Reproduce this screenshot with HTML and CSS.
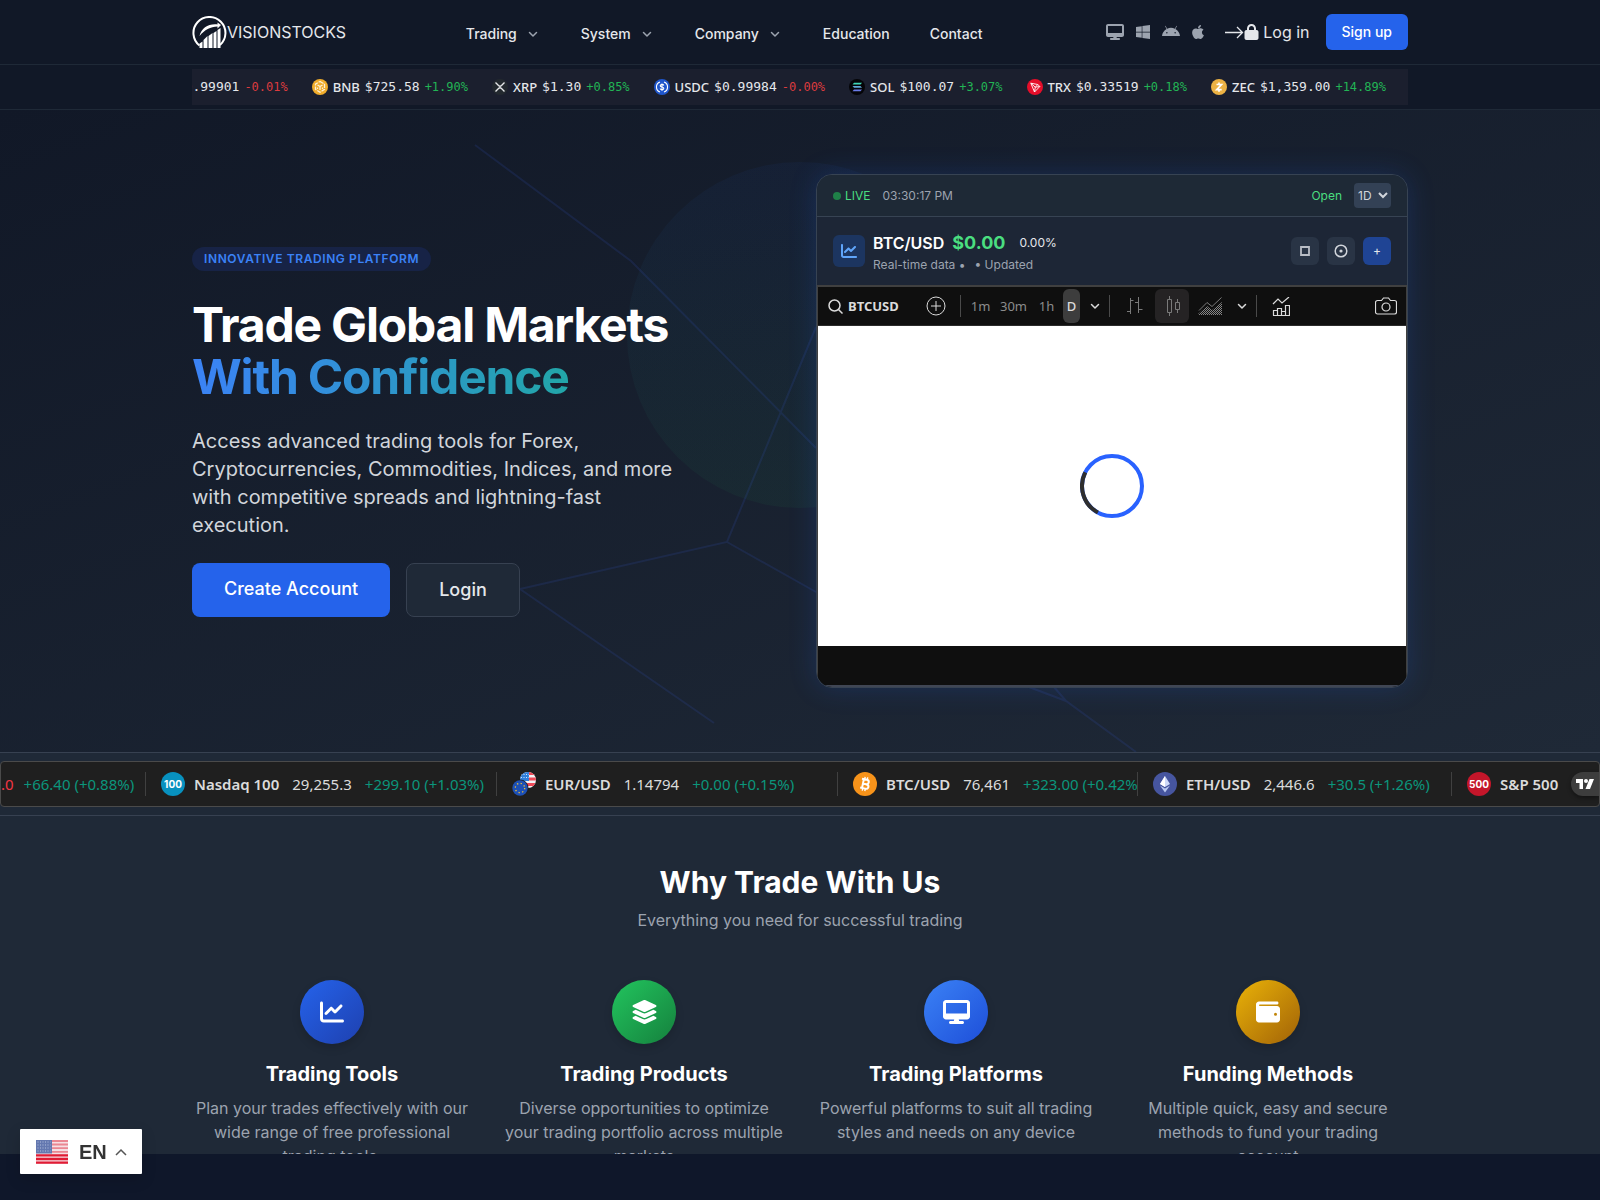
FILE: index.html
```html
<!DOCTYPE html>
<html lang="en">
<head>
<meta charset="utf-8">
<meta name="viewport" content="width=device-width, initial-scale=1">
<title>VisionStocks</title>
<link rel="stylesheet" href="styles.css">
</head>
<body>
<svg class="defs" aria-hidden="true">
  <symbol id="i-desktop" viewBox="0 0 576 512"><path d="M64 0C28.7 0 0 28.7 0 64V352c0 35.3 28.7 64 64 64H240l-10.7 32H160c-17.7 0-32 14.3-32 32s14.3 32 32 32H416c17.7 0 32-14.3 32-32s-14.3-32-32-32H346.7L336 416H512c35.3 0 64-28.7 64-64V64c0-35.3-28.7-64-64-64H64zM512 64V288H64V64H512z"/></symbol>
  <symbol id="i-chart" viewBox="0 0 512 512"><path d="M64 64c0-17.7-14.3-32-32-32S0 46.3 0 64V400c0 44.2 35.8 80 80 80H480c17.7 0 32-14.3 32-32s-14.3-32-32-32H80c-8.8 0-16-7.2-16-16V64zm406.6 86.6c12.5-12.5 12.5-32.8 0-45.3s-32.8-12.5-45.3 0L320 210.7l-57.4-57.4c-12.5-12.5-32.8-12.5-45.3 0l-112 112c-12.5 12.5-12.5 32.8 0 45.3s32.8 12.5 45.3 0L240 221.3l57.4 57.4c12.5 12.5 32.8 12.5 45.3 0l128-128z"/></symbol>
  <symbol id="i-chevron" viewBox="0 0 16 16"><path d="M4.5 6.5 8 10l3.500-3.500" fill="none" stroke="currentColor" stroke-width="1.500" stroke-linecap="round" stroke-linejoin="round"/></symbol>
</svg>

<div class="page">
  <header class="header">
    <div class="container header-row">
      <a class="brand" href="#">
        <svg class="brand-mark" viewBox="0 0 34 32" aria-hidden="true">
          <path d="M7 29.500A16 16 0 1 1 27.500 29" fill="none" stroke="#fff" stroke-width="2"/>
          <path d="M7 20C9 12 16 7.500 25 8.500V6.500l3.500 2.500-3.500 3.500V10.500C18 10.500 12 14 7 20z" fill="#fff"/>
          <path d="M7 27.500l3-2V32H7zM11 24l4-4v12h-4zM16 20l4-3v15h-4zM21 17l3-2v17h-3zM25 14l3-2v20h-3z" fill="#fff"/>
        </svg>
        <span>VISIONSTOCKS</span>
      </a>
      <nav class="nav" aria-label="Main">
        <a href="#">Trading <svg class="chev" aria-hidden="true"><use href="#i-chevron"/></svg></a>
        <a href="#">System <svg class="chev" aria-hidden="true"><use href="#i-chevron"/></svg></a>
        <a href="#">Company <svg class="chev" aria-hidden="true"><use href="#i-chevron"/></svg></a>
        <a href="#">Education</a>
        <a href="#">Contact</a>
      </nav>
      <div class="actions">
        <div class="platforms">
          <svg width="18" height="16" aria-hidden="true"><use href="#i-desktop"/></svg>
          <svg width="14" height="16" viewBox="0 0 448 512" aria-hidden="true"><path d="M0 93.700l183.600-25.300v177.400H0V93.700zm0 324.600l183.600 25.300V268.400H0v149.900zm203.800 28L448 480V268.400H203.800v177.900zm0-380.600v180.100H448V32L203.800 65.700z"/></svg>
          <svg width="18" height="16" viewBox="0 0 576 512" aria-hidden="true"><path d="M420.550,301.930a24,24,0,1,1,24-24,24,24,0,0,1-24,24m-265.100,0a24,24,0,1,1,24-24,24,24,0,0,1-24,24m273.700-144.480,47.940-83a10,10,0,1,0-17.270-10h0l-48.540,84.070a301.250,301.250,0,0,0-246.560,0L116.180,64.450a10,10,0,1,0-17.270,10h0l47.940,83C64.530,202.220,8.240,285.550,0,384H576c-8.240-98.450-64.540-181.780-146.850-226.550"/></svg>
          <svg width="12" height="16" viewBox="0 0 384 512" aria-hidden="true"><path d="M318.700 268.700c-.2-36.700 16.400-64.400 50-84.800-18.800-26.900-47.200-41.700-84.700-44.600-35.500-2.800-74.300 20.700-88.500 20.700-15 0-49.400-19.700-76.400-19.700C63.300 141.200 4 184.800 4 273.500q0 39.300 14.400 81.200c12.800 36.700 59 126.700 107.200 125.200 25.200-.6 43-17.900 75.800-17.900 31.800 0 48.300 17.900 76.400 17.900 48.600-.7 90.400-82.500 102.600-119.300-65.200-30.700-61.700-90-61.700-91.900zm-56.600-164.200c27.300-32.400 24.800-61.900 24-72.500-24.100 1.400-52 16.400-67.900 34.900-17.500 19.800-27.800 44.300-25.600 71.900 26.100 2 49.900-11.400 69.500-34.300z"/></svg>
        </div>
        <a class="login" href="#"><svg width="20" height="16" viewBox="0 0 20 16" fill="none" stroke="#e5e7eb" stroke-width="1.300" aria-hidden="true"><path d="M1 8.500h17.500M13 3l5.500 5.500L13 14"/></svg><svg width="15" height="16" viewBox="0 0 448 512" aria-hidden="true"><path d="M144 144v48H304V144c0-44.200-35.800-80-80-80s-80 35.800-80 80zM80 192V144C80 64.500 144.500 0 224 0s144 64.500 144 144v48h16c35.300 0 64 28.700 64 64V448c0 35.300-28.700 64-64 64H64c-35.300 0-64-28.700-64-64V256c0-35.300 28.700-64 64-64H80z"/></svg><span class="login-text">Log in</span></a>
        <a class="signup" href="#">Sign up</a>
      </div>
    </div>
  </header>

  <div class="coins">
    <div class="container">
      <ul class="coin-list">
        <li><span class="price">$0.99901</span><span class="pct down">-0.01%</span></li>
        <li>
          <svg class="coin" viewBox="0 0 16 16" aria-hidden="true"><circle cx="8" cy="8" r="8" fill="#f0ac2b"/><path d="M8 2.500l4.500 2.600v5.300L8 13.200l-4.500-2.800V5.100z" fill="none" stroke="#fdf1d8" stroke-width="1.300" stroke-dasharray="4 1"/><path d="M5.500 6L8 7.500 10.500 6M8 7.500V11M5.500 8.500v1.500M10.500 8.500v1.500" fill="none" stroke="#fdf1d8" stroke-width="1.300"/></svg>
          <span class="sym">BNB</span><span class="price">$725.58</span><span class="pct up">+1.90%</span></li>
        <li>
          <svg class="coin" viewBox="0 0 16 16" aria-hidden="true"><circle cx="8" cy="8" r="8" fill="#23292f"/><path d="M3.500 3.500l3 3q1.500 1.300 3 0l3-3M3.500 12.500l3-3q1.500-1.300 3 0l3 3" fill="none" stroke="#e6e8ea" stroke-width="1.400"/></svg>
          <span class="sym">XRP</span><span class="price">$1.30</span><span class="pct up">+0.85%</span></li>
        <li>
          <svg class="coin" viewBox="0 0 16 16" aria-hidden="true"><circle cx="8" cy="8" r="8" fill="#1f56cc"/><path d="M6 3a5.300 5.300 0 0 0 0 10M10 3a5.300 5.300 0 0 1 0 10M9.800 6.500Q9.300 5.400 8 5.400T6.200 6.700Q6.200 7.700 8 8T9.800 9.400Q9.800 10.600 8 10.600T6.200 9.400M8 4.500V12" fill="none" stroke="#fff" stroke-width="1.100"/></svg>
          <span class="sym">USDC</span><span class="price">$0.99984</span><span class="pct down">-0.00%</span></li>
        <li>
          <svg class="coin" viewBox="0 0 16 16" aria-hidden="true"><circle cx="8" cy="8" r="8" fill="#050508"/><path d="M5 3.700h8L11.500 5.500h-8z" fill="#3fd6b5"/><path d="M3.500 7h8L13 8.800H5z" fill="#5fa8d8"/><path d="M5 10.400h8l-1.500 1.800h-8z" fill="#6a7be8"/></svg>
          <span class="sym">SOL</span><span class="price">$100.07</span><span class="pct up">+3.07%</span></li>
        <li>
          <svg class="coin" viewBox="0 0 16 16" aria-hidden="true"><circle cx="8" cy="8" r="8" fill="#e50e2a"/><path d="M3.800 4.200l7 1.300 2 2L7.500 13zM3.800 4.200l4.500 4M12.800 7.500l-4.500.7L7.500 13M10.800 5.500L8.300 8.200" fill="none" stroke="#fff" stroke-width=".9" stroke-linejoin="round"/></svg>
          <span class="sym">TRX</span><span class="price">$0.33519</span><span class="pct up">+0.18%</span></li>
        <li>
          <svg class="coin" viewBox="0 0 16 16" aria-hidden="true"><circle cx="8" cy="8" r="8" fill="#ecb244"/><path d="M5.500 5.500h5L5.700 10.700h5M8 3.500v2M8 10.700v2" fill="none" stroke="#fff" stroke-width="1.700"/></svg>
          <span class="sym">ZEC</span><span class="price">$1,359.00</span><span class="pct up">+14.89%</span></li>
      </ul>
    </div>
  </div>

  <section class="hero">
    <svg class="hero-art" viewBox="0 0 1600 642" preserveAspectRatio="xMidYMid slice" aria-hidden="true">
      <defs><linearGradient id="g-disc" x1="0" y1="0" x2="0" y2="1"><stop offset="0" stop-color="#2563eb"/><stop offset="1" stop-color="#22c55e"/></linearGradient></defs>
      <circle cx="800" cy="225" r="173" fill="url(#g-disc)" opacity=".05"/>
      <g fill="none" stroke="#3b5bdb" stroke-width="2" opacity=".14">
        <path d="M475 35L631 151L816 338M816 217L727 432L520 479L714 613M727 432L816 482L900 530M1000 566L1066 591L1136 642M1048 570L1066 591"/>
      </g>
    </svg>
    <div class="container hero-grid">
      <div class="hero-copy">
        <span class="badge">INNOVATIVE TRADING PLATFORM</span>
        <h1>Trade Global Markets <span class="accent">With Confidence</span></h1>
        <p class="lead">Access advanced trading tools for Forex, Cryptocurrencies, Commodities, Indices, and more with competitive spreads and lightning-fast execution.</p>
        <div class="cta">
          <a class="btn btn-primary" href="#">Create Account</a>
          <a class="btn btn-outline" href="#">Login</a>
        </div>
      </div>

      <div class="card">
        <div class="card-top">
          <div class="live"><i class="dot"></i><span class="green">LIVE</span><time>03:30:17 PM</time></div>
          <div class="status"><span class="green">Open</span>
            <select aria-label="Interval"><option>1D</option><option>1W</option></select></div>
        </div>
        <div class="card-head">
          <div class="pair-icon"><svg width="16" height="16" aria-hidden="true"><use href="#i-chart"/></svg></div>
          <div class="pair">
            <div class="pair-line"><strong>BTC/USD</strong><b>$0.00</b><span>0.00%</span></div>
            <div class="pair-sub"><span>Real-time data •</span><span>• Updated</span></div>
          </div>
          <div class="tools">
            <button type="button" aria-label="Fullscreen"><svg width="12" height="12" viewBox="0 0 12 12" fill="none"><path d="M2 2h8v8H2z" stroke="#b9bdc5" stroke-width="1.800"/></svg></button>
            <button type="button" aria-label="Focus"><svg width="14" height="14" viewBox="0 0 14 14" fill="none"><circle cx="7" cy="7" r="5.800" stroke="#d1d5db" stroke-width="1.500"/><circle cx="7" cy="7" r="1.600" fill="#d1d5db"/></svg></button>
            <button type="button" class="add">+</button>
          </div>
        </div>
        <div class="widget">
          <div class="toolbar">
            <button type="button" class="t-symbol"><svg width="15" height="15" viewBox="0 0 15 15" fill="none" stroke="#dbdbdb" stroke-width="1.500" aria-hidden="true"><circle cx="6.500" cy="6.500" r="5.500"/><path d="M10.500 10.500l4 4"/></svg>BTCUSD</button>
            <button type="button" class="t-icon t-wide" aria-label="Compare"><svg width="20" height="20" viewBox="0 0 20 20" fill="none" stroke="#dbdbdb"><circle cx="10" cy="10" r="9"/><path d="M5 10h10M10 5v10"/></svg></button>
            <i class="sep"></i>
            <div class="intervals">
              <button type="button">1m</button><button type="button">30m</button><button type="button">1h</button><button type="button" class="on">D</button>
            </div>
            <button type="button" class="t-drop" aria-label="More intervals"><svg class="chev" aria-hidden="true"><use href="#i-chevron"/></svg></button>
            <i class="sep"></i>
            <div class="styles">
              <button type="button" class="t-icon" aria-label="Bars"><svg width="17" height="18" viewBox="0 0 17 18" fill="none" stroke="#7a7a7a"><path d="M4.500 1v16M1 14.500h3.500M4.500 3.500h3M12.500 0v16M9 5.500h3.500M12.500 12.500h4"/></svg></button>
              <button type="button" class="t-icon active" aria-label="Candles"><svg width="15" height="20" viewBox="0 0 15 20" fill="none" stroke="#7a7a7a"><path d="M2.500 3.500h4v13h-4zM4.500 0v3.500M4.500 16.500V20M10.500 6.500h4v7h-4zM12.500 3v3.500M12.500 13.500V17"/></svg></button>
              <button type="button" class="t-icon" aria-label="Area"><svg width="24" height="18" viewBox="0 0 24 18" fill="none"><defs><pattern id="p-dots" width="2" height="2" patternUnits="userSpaceOnUse"><path d="M0 0h1v1H0zM1 1h1v1H1z" fill="#858585"/></pattern></defs><path d="M0 17l9-8 5 4L24 5v13H0z" fill="url(#p-dots)"/><path d="M1 13.500L9 5.500l5 4 9.500-9" stroke="#7a7a7a"/></svg></button>
            </div>
            <button type="button" class="t-drop" aria-label="More styles"><svg class="chev" aria-hidden="true"><use href="#i-chevron"/></svg></button>
            <i class="sep"></i>
            <button type="button" class="t-icon t-ind" aria-label="Indicators"><svg width="18" height="19" viewBox="0 0 18 19" fill="none" stroke="#dbdbdb" stroke-width="1.200"><path d="M1 7l5-5 4 4 7-6M1.500 18.500v-5h4v5M5.500 18.500v-7h4v7M9.500 18.500v-4h4v4M13.500 18.500V8.500h4v10zM1 18.500h16"/></svg></button>
            <button type="button" class="t-icon t-cam" aria-label="Snapshot"><svg width="22" height="18" viewBox="0 0 22 18" fill="none" stroke="#dbdbdb" stroke-width="1.200"><path d="M6.500 3.500l2-2.500h5l2 2.500h4a2 2 0 0 1 2 2V15a2 2 0 0 1-2 2h-17a2 2 0 0 1-2-2V5.500a2 2 0 0 1 2-2z"/><circle cx="11" cy="10" r="4"/></svg></button>
          </div>
          <div class="chart">
            <svg width="64" height="64" viewBox="0 0 64 64" fill="none" stroke-width="4" aria-hidden="true"><circle cx="32" cy="32" r="30" stroke="#2962ff"/><path d="M17.900 58.500A30 30 0 0 1 5.300 18.400" stroke="#2e2e2e"/></svg>
          </div>
          <div class="chart-foot"></div>
        </div>
      </div>
    </div>
  </section>

  <section class="tape-wrap">
    <div class="tape">
      <div class="quote quote-first"><span class="last neg">.0</span><span class="chg">+66.40 (+0.88%)</span></div>
      <div class="quote"><span class="disc disc-ndx">100</span><b>Nasdaq 100</b><span class="last">29,255.3</span><span class="chg">+299.10 (+1.03%)</span></div>
      <div class="quote">
        <svg class="q-icon" viewBox="0 0 24 24" aria-hidden="true"><defs><clipPath id="c-us"><circle cx="16" cy="8" r="8"/></clipPath></defs><g clip-path="url(#c-us)"><path d="M8 0h16v16H8z" fill="#f3f3f5"/><path d="M16 0h8v3h-8zM16 5.500h8v3h-8zM8 11h16v3H8z" fill="#ee4a58"/><path d="M8 0h9v9H8z" fill="#2f7fdc"/><path d="M9 2.500h8M9 5.500h8" stroke="#cfe4fa" stroke-dasharray="1 1.500"/></g><circle cx="8" cy="16" r="8.500" fill="#1e1e1e"/><circle cx="8" cy="16" r="7.700" fill="#1d50b5"/><circle cx="8" cy="16" r="4.700" fill="none" stroke="#f2c230" stroke-width="1.300" stroke-dasharray="1.300 2.400"/></svg>
        <b>EUR/USD</b><span class="last">1.14794</span><span class="chg">+0.00 (+0.15%)</span></div>
      <div class="quote">
        <svg class="q-icon" viewBox="0 0 24 24" aria-hidden="true"><circle cx="12" cy="12" r="12" fill="#f7931a"/><g transform="rotate(12 12 12)" fill="none" stroke="#fff" stroke-width="2"><path d="M8 7.500h5q2.300 0 2.300 2.200T13 12H9.700M13 12q3 0 3 2.300T13 16.500H8M9.900 7.500v9"/><path d="M10.700 5v2.500M13.300 5v2.500M10.700 16.500V19M13.300 16.500V19" stroke-width="1.400"/></g></svg>
        <b>BTC/USD</b><span class="last">76,461</span><span class="chg">+323.00 (+0.42%)</span></div>
      <div class="quote">
        <svg class="q-icon" viewBox="0 0 24 24" aria-hidden="true"><circle cx="12" cy="12" r="12" fill="#46559f"/><path d="M12 4l5 8-5 3-5-3z" fill="#cdd9f8"/><path d="M12 4v11l-5-3z" fill="#fff"/><path d="M7 13.500l5 3 5-3-5 7z" fill="#b9c8f0"/></svg>
        <b>ETH/USD</b><span class="last">2,446.6</span><span class="chg">+30.5 (+1.26%)</span></div>
      <div class="quote"><span class="disc disc-spx">500</span><b>S&amp;P 500</b></div>
      <a class="tv" href="#" aria-label="TradingView"><svg width="18" height="11" viewBox="0 0 18 11" aria-hidden="true"><path d="M0 0h7v10H3.500V4H0zM13.500 0H18l-4 10H9.500z" fill="#fff"/><circle cx="10" cy="2" r="2" fill="#fff"/></svg></a>
    </div>
  </section>

  <section class="features">
    <div class="container">
      <h2>Why Trade With Us</h2>
      <p class="sub">Everything you need for successful trading</p>
      <div class="feature-grid">
        <article>
          <div class="orb orb-indigo"><svg width="24" height="24" aria-hidden="true"><use href="#i-chart"/></svg></div>
          <h3>Trading Tools</h3><p>Plan your trades effectively with our wide range of free professional trading tools.</p>
        </article>
        <article>
          <div class="orb orb-green"><svg width="27" height="24" viewBox="0 0 576 512" aria-hidden="true"><path d="M264.500 5.200c14.900-6.900 32.100-6.900 47 0l218.600 101c8.500 3.900 13.900 12.400 13.900 21.800s-5.400 17.900-13.900 21.800l-218.600 101c-14.900 6.900-32.100 6.900-47 0L45.900 149.800C37.400 145.800 32 137.300 32 128s5.400-17.900 13.900-21.800L264.500 5.200zM476.900 209.600l53.200 24.600c8.500 3.900 13.900 12.400 13.900 21.800s-5.400 17.900-13.900 21.800l-218.600 101c-14.900 6.900-32.100 6.900-47 0L45.900 277.800C37.400 273.800 32 265.300 32 256s5.400-17.900 13.900-21.800l53.200-24.600 152 70.200c23.400 10.800 50.400 10.800 73.800 0l152-70.200zm-152 198.200l152-70.200 53.200 24.600c8.500 3.900 13.900 12.400 13.900 21.800s-5.400 17.900-13.900 21.800l-218.600 101c-14.900 6.900-32.100 6.900-47 0L45.900 405.800C37.400 401.800 32 393.300 32 384s5.400-17.900 13.900-21.800l53.200-24.600 152 70.200c23.400 10.800 50.400 10.800 73.800 0z"/></svg></div>
          <h3>Trading Products</h3><p>Diverse opportunities to optimize your trading portfolio across multiple markets</p>
        </article>
        <article>
          <div class="orb orb-blue"><svg width="27" height="24" aria-hidden="true"><use href="#i-desktop"/></svg></div>
          <h3>Trading Platforms</h3><p>Powerful platforms to suit all trading styles and needs on any device</p>
        </article>
        <article>
          <div class="orb orb-gold"><svg width="24" height="24" viewBox="0 0 512 512" aria-hidden="true"><path d="M64 32C28.700 32 0 60.700 0 96V416c0 35.300 28.700 64 64 64H448c35.300 0 64-28.700 64-64V192c0-35.300-28.700-64-64-64H80c-8.800 0-16-7.200-16-16s7.200-16 16-16H448c17.700 0 32-14.300 32-32s-14.300-32-32-32H64zM416 272a32 32 0 1 1 0 64 32 32 0 1 1 0-64z"/></svg></div>
          <h3>Funding Methods</h3><p>Multiple quick, easy and secure methods to fund your trading account</p>
        </article>
      </div>
    </div>
  </section>
</div>

<button type="button" class="lang">
  <svg width="32" height="24" viewBox="0 0 32 24" aria-hidden="true"><path d="M0 0h32v24H0z" fill="#f6dfe3"/><path d="M0 1h32M0 4.500h32M0 8.200h32M0 11.800h32" stroke="#ea8792" stroke-width="1.800"/><path d="M0 15.400h32M0 19h32M0 22.600h32" stroke="#e01b34" stroke-width="2.400"/><path d="M0 0h16v13.500H0z" fill="#6478b0"/><path d="M1.500 2h13M1.500 5h13M1.500 8h13M1.500 11h13" stroke="#b4c0de" stroke-dasharray="1 1.500"/></svg>
  <span>EN</span>
  <svg width="12" height="8" viewBox="0 0 12 8" fill="none" stroke="#555" stroke-width="1.500" aria-hidden="true"><path d="M1 7l5-5 5 5"/></svg>
</button>
</body>
</html>
```
FILE: styles.css
```css
* { box-sizing: border-box; }

body {
  margin: 0;
  height: 100vh;
  display: grid;
  grid-template-rows: minmax(0, 1fr) 46px;
  overflow: hidden;
  background: #0f172a;
  color: #e5e7eb;
  font: 16px/24px Inter, sans-serif;
}

a { color: inherit; text-decoration: none; }
button { border: 0; padding: 0; background: none; color: inherit; font: inherit; }
svg { display: block; flex: none; }
svg:not([fill]) { fill: currentColor; }
h1, h2, h3, p, ul { margin: 0; padding: 0; }
.defs { position: absolute; width: 0; height: 0; }
.page { overflow: hidden; background: #1f2937; }
.container { max-width: 1280px; margin: 0 auto; padding: 0 32px; }
.chev { width: 16px; height: 16px; }

/* Header */
.header { background: #111827; border-bottom: 1px solid #1f2937; }
.header-row { display: flex; align-items: center; justify-content: space-between; height: 64px; }
.brand { display: flex; align-items: center; }
.brand-mark { width: 35px; height: 32px; }
.nav { display: flex; gap: 40px; padding: 4px 4px 0 0; font-size: 14px; font-weight: 500; }
.nav a { display: flex; align-items: center; gap: 8px; }
.nav .chev { color: #9ca3af; }
.actions { display: flex; align-items: center; gap: 16px; }
.platforms { display: flex; gap: 12px; padding-right: 4px; color: #9ca3af; }
.login { display: flex; align-items: center; }
.login-text { padding-left: 4px; }
.signup { padding: 8px 16px; border-radius: 6px; background: #2563eb; color: #fff; font-size: 14px; line-height: 20px; font-weight: 500; }

/* Coin ticker */
.coins { padding: 4px 0; background: #111827; border-bottom: 1px solid #1f2937; }
.coin-list {
  display: flex; align-items: center; justify-content: flex-end; gap: 24px;
  height: 36px; padding-right: 22px; overflow: hidden; list-style: none; background: #1b1f2e;
}
.coin-list li { display: flex; align-items: center; flex: none; }
.coin { width: 16px; height: 16px; margin-right: 5px; }
.sym { margin-right: 5px; font: 500 13px/20px "Noto Sans", sans-serif; }
.price { margin-right: 5px; font: 13px/20px "DejaVu Sans Mono", monospace; }
.pct { font: 12px/20px "DejaVu Sans Mono", monospace; }
.up { color: #22b455; }
.down { color: #dc3b3e; }

/* Hero */
.hero { position: relative; padding: 64px 0; background: linear-gradient(160deg, #111827, #1f2937); }
.hero-art { position: absolute; inset: 0; width: 100%; height: 100%; }
.hero-grid { position: relative; display: grid; grid-template-columns: 1fr 1fr; gap: 32px; align-items: center; }
.hero-copy { display: flex; flex-direction: column; align-items: flex-start; padding-top: 2px; }
.badge {
  margin-bottom: 28px; padding: 4px 12px; border-radius: 12px; background: #172346;
  color: #3b82f6; font-size: 12px; line-height: 16px; font-weight: 600; letter-spacing: .05em;
}
h1 { margin-bottom: 24px; color: #fff; font-size: 48px; line-height: 52px; font-weight: 700; letter-spacing: -.025em; }
.accent {
  display: block; width: fit-content; color: transparent;
  background: linear-gradient(90deg, #3b82f6, #22a6a8); -webkit-background-clip: text; background-clip: text;
}
.lead { max-width: 500px; margin-bottom: 24px; color: #d1d5db; font-size: 20px; line-height: 28px; }
.cta { display: flex; gap: 16px; }
.btn { padding: 12px 32px; border-radius: 8px; font-size: 18px; line-height: 28px; font-weight: 500; }
.btn-primary { background: #2563eb; color: #fff; }
.btn-outline { border: 1px solid #374151; background: #1f2937; }

/* Trading card */
.card {
  overflow: hidden; border: 1px solid #374353; border-radius: 16px; background: #1e293b;
  box-shadow: 0 0 28px rgba(37, 99, 235, .2);
  font-size: 12px; line-height: 16px;
}
.card-top { display: flex; align-items: center; justify-content: space-between; height: 42px; padding: 0 16px; border-bottom: 1px solid #374353; background: #1e2936; }
.live, .status { display: flex; align-items: center; gap: 12px; }
.live { gap: 4px; }
.dot { width: 8px; height: 8px; border-radius: 50%; background: #1f8048; }
.green { color: #4ade80; }
.live time { padding-left: 8px; color: #9ca3af; }
.status select { padding: 4px 0; border: 0; border-radius: 4px; background: #334155; color: #d1d5db; font: 12px/16px Inter, sans-serif; }
.card-head { display: flex; align-items: center; gap: 8px; padding: 12px 16px; background: #1d2636; }
.pair-icon { display: grid; place-items: center; width: 32px; height: 32px; border-radius: 6px; background: #1c3560; color: #60a5fa; }
.pair { flex: 1; }
.pair-line { display: flex; align-items: center; gap: 8px; line-height: 28px; }
.pair-line strong { color: #fff; font-size: 16px; font-weight: 600; }
.pair-line b { color: #4ade80; font-size: 18px; font-weight: 700; }
.pair-line span { padding-left: 6px; }
.pair-sub { display: flex; gap: 9px; color: #9ca3af; }
.tools { display: flex; gap: 8px; }
.tools button { display: grid; place-items: center; width: 28px; height: 28px; border-radius: 6px; background: #293445; }
.tools .add { background: #1f4494; font-size: 12px; }

.widget { border: 1px solid #404040; border-top-width: 2px; border-bottom: 2px solid #404654; background: #0f0f0f; font-family: "Trebuchet MS", "Noto Sans", sans-serif; }
.toolbar { display: flex; align-items: center; height: 39px; padding: 0 3px 0 10px; border-bottom: 1px solid #2b2b2b; color: #dbdbdb; }
.t-symbol { display: flex; align-items: center; gap: 5px; width: 84px; font-size: 13px; font-weight: 700; }
.t-icon { display: grid; place-items: center; width: 34px; height: 34px; border-radius: 6px; }
.t-wide { width: 48px; }
.sep { width: 1px; height: 22px; background: #4a4a4a; }
.intervals { display: flex; align-items: center; margin-left: 3px; color: #8c8c8c; font-size: 13px; }
.intervals button { width: 33px; height: 34px; border-radius: 6px; }
.intervals .on { width: 17px; background: #3d3d3d; color: #dbdbdb; font-weight: 500; }
.t-drop { display: grid; place-items: center; width: 29px; }
.styles { display: flex; gap: 4px; margin-left: 7px; }
.active { background: #252324; }
.t-ind { margin-left: 7px; }
.t-cam { margin-left: auto; }
.chart { display: grid; place-items: center; height: 320px; background: #fff; }
.chart-foot { height: 39px; }

/* Market tape */
.tape-wrap { padding: 8px 0; border: 1px solid #374151; border-width: 1px 0; background: #1f2937; }
.tape {
  position: relative; display: grid; grid-template-columns: 144px 351px 341px 300px 314px 1fr; align-items: center;
  height: 46px; overflow: hidden; border: 1px solid #4a4a4a; border-radius: 4px; background: #1f1f1f;
  color: #dbdbdb; font: 15px/24px "Trebuchet MS", "Noto Sans", sans-serif;
}
.quote { display: flex; align-items: center; gap: 13px; padding-left: 15px; overflow: hidden; border-left: 1px solid #404040; white-space: nowrap; }
.quote-first { padding: 0; border: 0; gap: 10px; }
.quote b { margin-left: -4px; font-weight: 600; }
.q-icon, .disc { width: 24px; height: 24px; flex: none; }
.disc { border-radius: 50%; color: #fff; text-align: center; font: 700 10px/24px Inter, sans-serif; }
.disc-ndx { background: #0891bf; }
.disc-spx { background: #c4162a; }
.chg { color: #0b957c; }
.neg { color: #f23645; }
.tv { position: absolute; top: 10px; right: 0; display: grid; place-items: center; width: 28px; height: 24px; border-radius: 12px 0 0 12px; background: #3d3d3d; box-shadow: 0 2px 4px rgba(0, 0, 0, .4); }

/* Features */
.features { padding: 48px 0; background: #1f2937; text-align: center; }
h2 { margin-bottom: 8px; color: #fff; font-size: 30px; line-height: 36px; font-weight: 700; }
.sub { margin-bottom: 48px; color: #9ca3af; }
.feature-grid { display: grid; grid-template-columns: repeat(4, 1fr); gap: 32px; }
.feature-grid p { color: #9ca3af; }
h3 { margin-bottom: 8px; color: #fff; font-size: 20px; line-height: 28px; font-weight: 700; }
.orb { display: grid; place-items: center; width: 64px; height: 64px; margin: 0 auto 16px; border-radius: 50%; color: #fff; box-shadow: 0 4px 8px rgba(0, 0, 0, .15); }
.orb-indigo { background: linear-gradient(135deg, #2563eb, #1e40af); }
.orb-green { background: linear-gradient(135deg, #22c55e, #15803d); }
.orb-blue { background: linear-gradient(135deg, #3b82f6, #1d4ed8); }
.orb-gold { background: linear-gradient(135deg, #eab308, #a16207); }

/* Language switcher */
.lang {
  position: fixed; left: 20px; bottom: 26px; display: flex; align-items: center; width: 122px; height: 45px; padding: 0 16px;
  border-radius: 1px; background: #fff; color: #333; font: 700 20px/24px "Liberation Sans", Arial, sans-serif;
  box-shadow: 0 5px 15px rgba(0, 0, 0, .15);
}
.lang span { margin: 0 8px 0 11px; }
```
